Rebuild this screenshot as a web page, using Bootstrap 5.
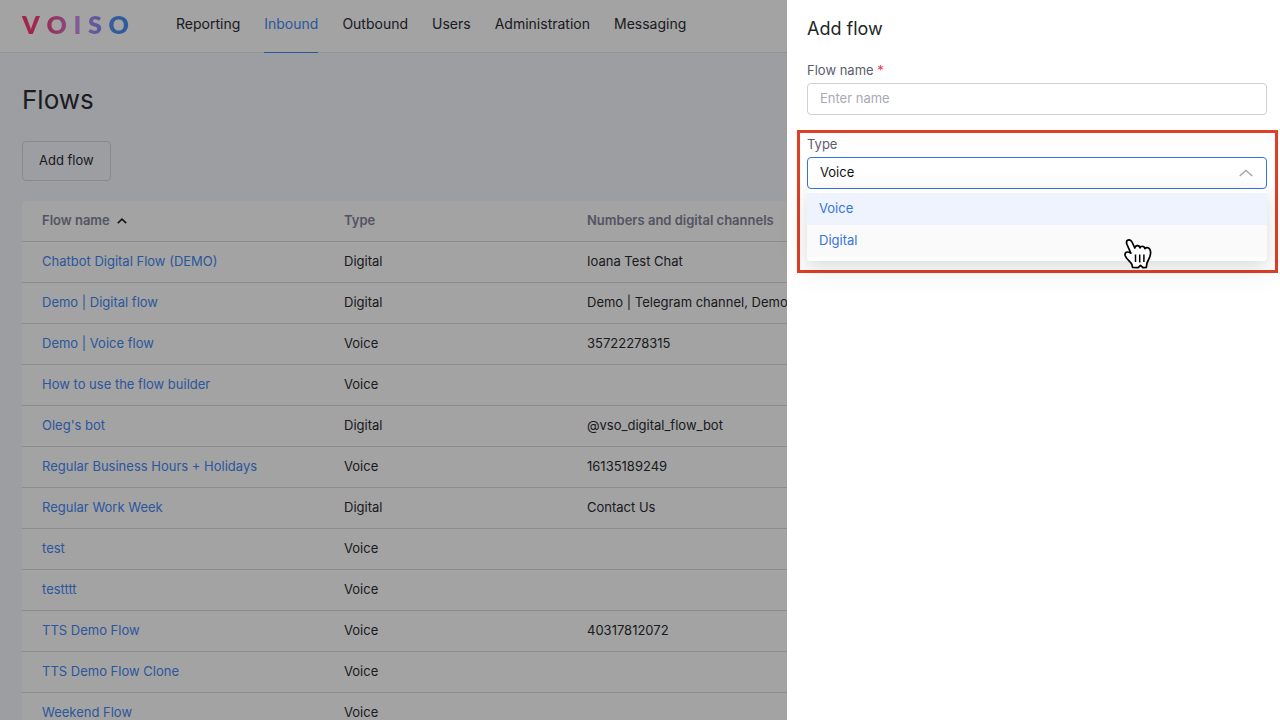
<!DOCTYPE html>
<html lang="en">
<head>
<meta charset="utf-8">
<meta name="viewport" content="width=device-width, initial-scale=1">
<title>Flows – Voiso</title>
<link href="https://cdn.jsdelivr.net/npm/bootstrap@5.3.0/dist/css/bootstrap.min.css" rel="stylesheet">
<style>
  body { font-family: Inter, "Liberation Sans", sans-serif; font-size: 13px; line-height: 20px; color: #2b2c33; background: #f5f7fd; }

  .topbar { height: 53px; padding: 0 22px; background: #fff; border-bottom: 1px solid #e6e6e6; }
  .brand { width: 107px; font: 800 25px/48px Lato, sans-serif; text-decoration: none; color: transparent;
    background: linear-gradient(90deg, #ff3a76 10%, #e3569f 32%, #d28cf0 50%, #9a8cf0 68%, #4a90f5 88%); -webkit-background-clip: text; background-clip: text; }
  .brand:hover { color: transparent; }
  .topbar .nav { gap: 24px; margin-left: 47px; }
  .topbar .nav-link { padding: 0; font-size: 14px; line-height: 48px; height: 53px; color: #2b2c33; }
  .topbar .nav-link.active { color: #4588f5; border-bottom: 1px solid #4588f5; }

  .content { padding: 29px 22px 0; }
  .content h1 { font-size: 26px; line-height: 36px; font-weight: 400; margin-bottom: 23px; }
  .btn-add { height: 40px; padding: 0 16px; font-size: 13px; color: #2b2c33; border: 1px solid #d5d7dc; border-radius: 4px; margin-bottom: 20px; }

  .flows { table-layout: fixed; margin: 0; --bs-table-bg: #fff; border-radius: 4px 4px 0 0; overflow: hidden; }
  .flows th, .flows td { height: 41px; padding: 0 20px 2px; vertical-align: middle; white-space: nowrap; overflow: hidden; text-overflow: ellipsis; color: #2b2c33; border-bottom: 1px solid #dcdcde; }
  .flows thead th { height: 40px; font-weight: 600; color: #84849a; }
  .flows td a { text-decoration: none; color: #4588f5; }
  .flows .c-name { width: 302px; }
  .flows .c-type { width: 243px; }

  .offcanvas-backdrop.show { opacity: .36; }
  .panel.offcanvas { --bs-offcanvas-width: 493px; padding: 14px 13px 14px 20px; border: 0; transition: none; }
  .panel h2 { font-size: 18px; line-height: 30px; font-weight: 400; margin-bottom: 16px; }
  .panel .form-label { font-size: 13px; line-height: 20px; margin-bottom: 3px; color: #5c5c6b; }
  .required { color: #f5333f; }
  .panel .form-control, .panel .form-select { height: 32px; padding: 0 12px 2px; font-size: 13px; line-height: 20px; border: 1px solid #d0d0d4; border-radius: 4px; color: #111216; box-shadow: none; }
  .panel .form-control::placeholder { color: #a9a9b6; }
  .panel .form-select { border-color: #3474e0;
    background-image: url("data:image/svg+xml,%3Csvg xmlns='http://www.w3.org/2000/svg' viewBox='0 0 14 8'%3E%3Cpath d='M.7 7 7 1.4 13.300 7' fill='none' stroke='%23a5a5ad' stroke-width='1.400'/%3E%3C/svg%3E");
    background-size: 14px 8px; background-position: right 13px center; }

  .callout { margin: 15px -11px 0 -10px; padding: 1px 8px 81px 7px; border: 3px solid #df3f26; }
  .picker { position: relative; }
  .choices { position: absolute; top: 100%; left: 0; right: 0; padding: 4px 0; background: #fff; border-radius: 4px; box-shadow: 0 6px 16px rgba(20,50,40,.1), 0 9px 28px 8px rgba(0,0,0,.04); }
  .choices button { display: block; width: 100%; height: 32px; padding: 0 12px 2px; text-align: left; border: 0; background: #fafafa; color: #3474e0; }
  .choices button[aria-selected="true"] { background: #eef3fd; }
  .pointer { position: absolute; right: 114px; bottom: -9px; width: 30px; height: 32px; }
</style>
</head>
<body class="overflow-hidden">
<header class="topbar d-flex">
  <a class="brand d-flex justify-content-between" href="#" aria-label="Voiso"><span>V</span><span>O</span><span>I</span><span>S</span><span>O</span></a>
  <nav class="nav flex-nowrap">
    <a class="nav-link" href="#">Reporting</a>
    <a class="nav-link active" href="#">Inbound</a>
    <a class="nav-link" href="#">Outbound</a>
    <a class="nav-link" href="#">Users</a>
    <a class="nav-link" href="#">Administration</a>
    <a class="nav-link" href="#">Messaging</a>
  </nav>
</header>

<main class="content">
  <h1>Flows</h1>
  <button type="button" class="btn btn-add">Add flow</button>
  <table class="table flows">
    <thead>
      <tr>
        <th class="c-name" scope="col">Flow name <svg class="ms-1" width="10" height="6" viewBox="0 0 10 6" fill="none" stroke="#202126" stroke-width="1.600" aria-hidden="true"><path d="M.8 5.200 5 1.200 9.200 5.200"/></svg></th>
        <th class="c-type" scope="col">Type</th>
        <th scope="col">Numbers and digital channels</th>
      </tr>
    </thead>
    <tbody>
      <tr><td><a href="#">Chatbot Digital Flow (DEMO)</a></td><td>Digital</td><td>Ioana Test Chat</td></tr>
      <tr><td><a href="#">Demo | Digital flow</a></td><td>Digital</td><td>Demo | Telegram channel, Demo</td></tr>
      <tr><td><a href="#">Demo | Voice flow</a></td><td>Voice</td><td>35722278315</td></tr>
      <tr><td><a href="#">How to use the flow builder</a></td><td>Voice</td><td></td></tr>
      <tr><td><a href="#">Oleg's bot</a></td><td>Digital</td><td>@vso_digital_flow_bot</td></tr>
      <tr><td><a href="#">Regular Business Hours + Holidays</a></td><td>Voice</td><td>16135189249</td></tr>
      <tr><td><a href="#">Regular Work Week</a></td><td>Digital</td><td>Contact Us</td></tr>
      <tr><td><a href="#">test</a></td><td>Voice</td><td></td></tr>
      <tr><td><a href="#">testttt</a></td><td>Voice</td><td></td></tr>
      <tr><td><a href="#">TTS Demo Flow</a></td><td>Voice</td><td>40317812072</td></tr>
      <tr><td><a href="#">TTS Demo Flow Clone</a></td><td>Voice</td><td></td></tr>
      <tr><td><a href="#">Weekend Flow</a></td><td>Voice</td><td></td></tr>
    </tbody>
  </table>
</main>

<div class="offcanvas-backdrop show"></div>
<aside class="offcanvas offcanvas-end show panel" data-bs-backdrop="false" data-bs-scroll="true" tabindex="-1" aria-labelledby="panelTitle">
  <h2 id="panelTitle">Add flow</h2>
  <form>
    <div>
      <label class="form-label d-block" for="flowName">Flow name <span class="required">*</span></label>
      <input class="form-control" id="flowName" type="text" placeholder="Enter name">
    </div>
    <div class="callout">
      <label class="form-label d-block" for="flowType">Type</label>
      <div class="picker">
        <select class="form-select" id="flowType"><option selected>Voice</option><option>Digital</option></select>
        <div class="choices" role="listbox" aria-label="Type">
          <button type="button" role="option" aria-selected="true">Voice</button>
          <button type="button" role="option" aria-selected="false">Digital</button>
          <svg class="pointer" viewBox="0 0 30 32" aria-hidden="true">
            <path d="M7.800 15.200 4 6.500C3.200 4.400 3.400 2.700 4.900 2.100 6.700 1.300 8.200 2.300 9 4L11.800 10C12.200 8.200 13.300 7.500 14.600 7.600 16 7.700 16.800 8.600 17 9.900 17.500 8.600 18.500 8.100 19.700 8.300 21.100 8.500 21.800 9.400 21.900 10.700 22.700 9.700 23.800 9.400 25 9.800 27 10.500 27.600 12.300 27.600 14.500 27.500 19.500 25.300 21.500 24 25L23.300 29.300 20 29.700 17.500 27.400 15.200 29.700 9.600 29.400 8.800 26.200C7.200 23.500 3.400 21.200 2.200 17.800 1.500 15.600 2.700 13.900 4.600 14 6 14.100 7 14.600 7.800 15.200Z" fill="#fff" stroke="#000" stroke-width="1.700" stroke-linejoin="round"/>
            <path d="M12.500 16.500V24M16.700 16.500V24.500M20.900 16.500V24" stroke="#000" stroke-width="1.500"/>
          </svg>
        </div>
      </div>
    </div>
  </form>
</aside>
<script src="https://cdn.jsdelivr.net/npm/bootstrap@5.3.0/dist/js/bootstrap.bundle.min.js"></script>
</body>
</html>
